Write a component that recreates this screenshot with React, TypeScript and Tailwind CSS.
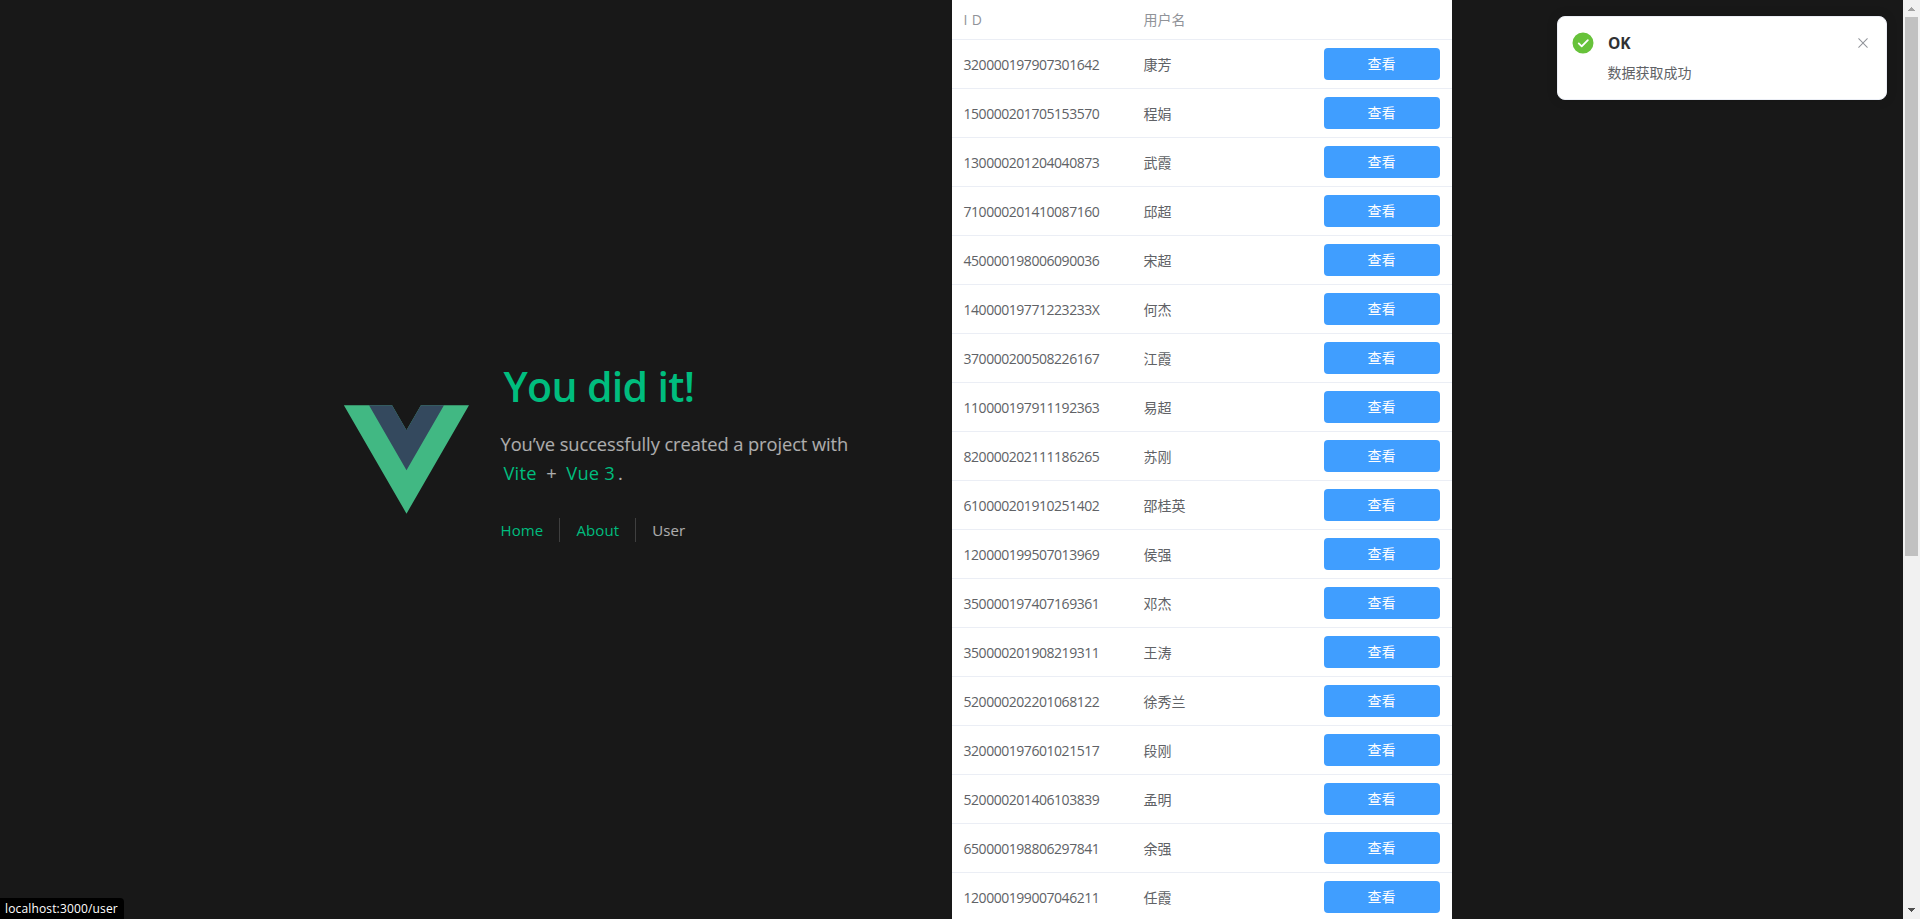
type User = {
  id: string;
  name: string;
};

const users: User[] = [
  { id: "320000197907301642", name: "康芳" },
  { id: "150000201705153570", name: "程娟" },
  { id: "130000201204040873", name: "武霞" },
  { id: "710000201410087160", name: "邱超" },
  { id: "450000198006090036", name: "宋超" },
  { id: "14000019771223233X", name: "何杰" },
  { id: "370000200508226167", name: "江霞" },
  { id: "110000197911192363", name: "易超" },
  { id: "820000202111186265", name: "苏刚" },
  { id: "610000201910251402", name: "邵桂英" },
  { id: "120000199507013969", name: "侯强" },
  { id: "350000197407169361", name: "邓杰" },
  { id: "350000201908219311", name: "王涛" },
  { id: "520000202201068122", name: "徐秀兰" },
  { id: "320000197601021517", name: "段刚" },
  { id: "520000201406103839", name: "孟明" },
  { id: "650000198806297841", name: "余强" },
  { id: "120000199007046211", name: "任霞" },
];

function VueLogo() {
  return (
    <svg viewBox="0 0 261.76 226.69" className="mr-8 size-[125px] shrink-0">
      <path d="M161.096.001l-30.225 52.351L100.647.001H-.005l130.877 226.688L261.749.001z" fill="#41b883" />
      <path d="M161.096.001l-30.225 52.351L100.647.001H52.346l78.526 136.01L209.398.001z" fill="#34495e" />
    </svg>
  );
}

function Intro() {
  return (
    <header className="flex w-[608px] shrink-0 items-center">
      <VueLogo />
      <div className="-ml-[0.5px] pb-[25px] text-white/65">
        <h1 className="pl-[3px] text-[41px] leading-[66px] font-semibold tracking-[-0.65px] whitespace-nowrap text-[#00bd7e]">
          You did it!
        </h1>
        <h3 className="mt-[10px] text-[18.3px] leading-[29px] tracking-[-0.07px] whitespace-nowrap">
          You’ve successfully created a project with
          <br />
          <a className="px-[3px] tracking-[0.2px] text-[#00bd7e]">Vite</a>
          <span className="px-[2px]"> + </span>
          <a className="px-[3px] tracking-[0.2px] text-[#00bd7e]">Vue 3</a>.
        </h3>
        <nav className="mt-[31px] flex text-[15px] leading-6 tracking-[0.12px]">
          <a className="pr-4 text-[#00bd7e]">Home</a>
          <a className="border-l border-[#545454]/65 px-4 text-[#00bd7e]">About</a>
          <a className="border-l border-[#545454]/65 px-4">User</a>
        </nav>
      </div>
    </header>
  );
}

function UserTable() {
  return (
    <div className="h-full w-[500px] shrink-0 overflow-hidden bg-white text-[14px] text-[#606266]">
      <div className="grid h-10 grid-cols-[180px_180px_140px] border-b border-[#ebeef5] leading-[39px] text-[#909399]">
        <div className="pl-[11.5px] tracking-[0.3px]">I D</div>
        <div className="pl-[11.5px]">用户名</div>
      </div>
      {users.map((user) => (
        <div
          key={user.id}
          className="grid h-[49px] grid-cols-[180px_180px_140px] items-center border-b border-[#ebeef5]"
        >
          <div className="pl-[11.5px] tracking-[-0.46px]">{user.id}</div>
          <div className="pt-px pl-[11.5px]">{user.name}</div>
          <div className="px-3">
            <button className="block h-8 w-full rounded bg-[#409eff] pr-px pb-[2px] text-white">查看</button>
          </div>
        </div>
      ))}
    </div>
  );
}

function Notification() {
  return (
    <div className="absolute top-4 right-[33px] flex h-[84px] w-[330px] rounded-lg border border-[#ebeef5] bg-white py-[14px] pr-[15px] pl-[13px] shadow-[0_0_12px_rgba(0,0,0,0.12)]">
      <svg viewBox="0 0 1024 1024" className="size-6 shrink-0 text-[#67c23a]">
        <path
          fill="currentColor"
          d="M512 64a448 448 0 1 1 0 896 448 448 0 0 1 0-896zm-55.808 536.384-99.52-99.584a38.4 38.4 0 1 0-54.336 54.336l126.72 126.72a38.272 38.272 0 0 0 54.336 0l262.4-262.464a38.4 38.4 0 1 0-54.272-54.336L456.192 600.384z"
        />
      </svg>
      <div className="ml-[13px] grow">
        <h2 className="text-[15.5px] leading-6 font-bold text-[#303133]">OK</h2>
        <p className="mt-[6px] -ml-[0.5px] text-[14px] leading-6 text-[#606266]">数据获取成功</p>
      </div>
      <svg viewBox="0 0 1024 1024" className="mt-1 size-4 text-[#909399]">
        <path
          fill="currentColor"
          d="M764.288 214.592 512 466.88 259.712 214.592a31.936 31.936 0 0 0-45.12 45.12L466.752 512 214.528 764.224a31.936 31.936 0 1 0 45.12 45.184L512 557.184l252.288 252.288a31.936 31.936 0 0 0 45.12-45.12L557.12 512.064l252.288-252.352a31.936 31.936 0 1 0-45.12-45.184z"
        />
      </svg>
    </div>
  );
}

function Scrollbar() {
  return (
    <div className="flex h-full w-[17px] shrink-0 flex-col items-center justify-between bg-[#f1f1f1]">
      <div className="flex flex-col items-center">
        <svg viewBox="0 0 17 17" className="size-[17px]" shapeRendering="crispEdges">
          <path d="M8 7h1v1h1v1h1v1h1v1H5v-1h1V9h1V8h1z" fill="#a3a3a3" />
        </svg>
        <div className="h-[539px] w-[13px] bg-[#c1c1c1]" />
      </div>
      <svg viewBox="0 0 17 17" className="size-[17px]" shapeRendering="crispEdges">
        <path d="M5 6h7v1h-1v1h-1v1H9v1H8V9H7V8H6V7H5z" fill="#505050" />
      </svg>
    </div>
  );
}

export default function App() {
  return (
    <div className="relative flex h-screen overflow-hidden bg-[#181818] font-['Open_Sans','Noto_Sans_CJK_SC',sans-serif]">
      <main className="flex grow pl-[344px]">
        <Intro />
        <UserTable />
      </main>
      <Scrollbar />
      <Notification />
      <div className="absolute bottom-0 left-0 h-[21px] w-[124px] rounded-tr bg-black pl-[5px] text-[12px] leading-[21px] tracking-[0.15px] whitespace-nowrap text-white">
        localhost:3000/user
      </div>
    </div>
  );
}
